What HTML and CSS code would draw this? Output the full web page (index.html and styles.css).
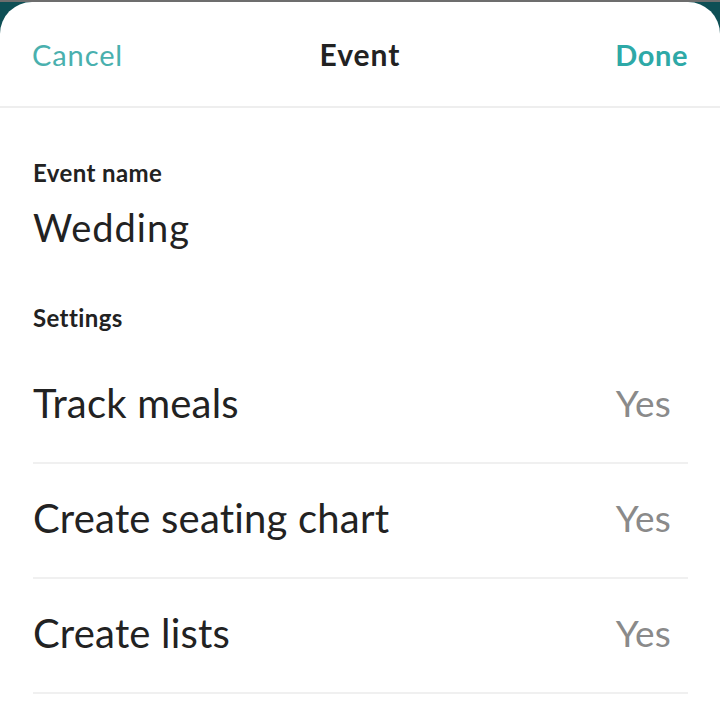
FILE: index.html
```html
<!DOCTYPE html>
<html lang="en">
<head>
  <meta charset="UTF-8" />
  <meta name="viewport" content="width=device-width, initial-scale=1.0" />
  <title>Event</title>
  <link rel="stylesheet" href="styles.css">
</head>
<body>
  <div class="sheet">
    <header class="topbar">
      <a class="cancel">Cancel</a>
      <h1>Event</h1>
      <a class="done">Done</a>
    </header>

    <section class="field">
      <div class="label">Event name</div>
      <div class="value">Wedding</div>
    </section>

    <section class="settings">
      <div class="label">Settings</div>
      <div class="row"><span>Track meals</span><span class="yes">Yes</span></div>
      <div class="row"><span>Create seating chart</span><span class="yes">Yes</span></div>
      <div class="row"><span>Create lists</span><span class="yes">Yes</span></div>
    </section>
  </div>
</body>
</html>
```

FILE: styles.css
```css
html, body {
  margin: 0;
  height: 100%;
}
body {
  font-family: Lato, "Open Sans", sans-serif;
  background: #0e4f55;
  border-top: 2px solid #6d6d6d;
  box-sizing: border-box;
  overflow: hidden;
}
.sheet {
  background: #fff;
  border-radius: 32px 32px 0 0;
  min-height: 100%;
}
.topbar {
  display: grid;
  grid-template-columns: 1fr auto 1fr;
  align-items: center;
  height: 104px;
  padding: 0 32px 0 32px;
  border-bottom: 2px solid #eeeeee;
}
.topbar h1 {
  margin: 0;
  font-size: 30px;
  font-weight: bold;
  letter-spacing: 1px;
  color: #222;
}
.cancel {
  font-size: 29px;
  letter-spacing: 0.9px;
  color: #49b0ae;
}
.done {
  justify-self: end;
  font-size: 29px;
  font-weight: bold;
  letter-spacing: 0.6px;
  color: #2ea9a7;
}
.field {
  padding: 50px 32px 0 33px;
}
.label {
  font-size: 24px;
  font-weight: bold;
  letter-spacing: 0.4px;
  color: #222;
}
.value {
  margin-top: 17px;
  font-size: 38px;
  letter-spacing: 1px;
  color: #222;
}
.settings {
  padding: 53px 32px 0 33px;
}
.row {
  display: flex;
  justify-content: space-between;
  align-items: center;
  height: 107px;
  padding: 0 17px 6px 0;
  border-bottom: 2px solid #f0f0f0;
  font-size: 40px;
  letter-spacing: 0.2px;
  color: #222;
}
.settings .label + .row {
  height: 132px;
  padding-top: 11px;
  padding-bottom: 0;
  box-sizing: border-box;
}
.yes {
  font-size: 37px;
  color: #8a8a8a;
}
```
